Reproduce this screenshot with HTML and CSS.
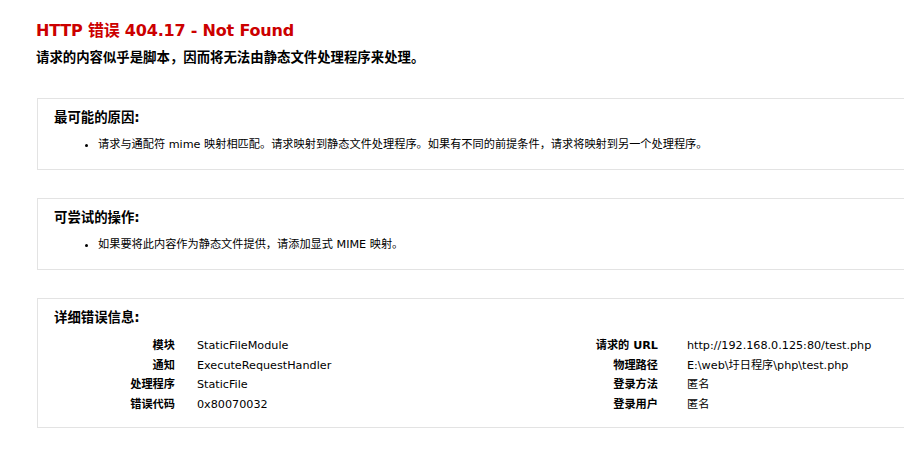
FILE: index.html
```html
<!DOCTYPE html>
<html>
<head>
<meta charset="utf-8">
<title>IIS 10.0 详细错误 - 404.17 - Not Found</title>
<link rel="stylesheet" href="styles.css">
</head>
<body>
<div id="content">

<div class="header">
<h1>HTTP 错误 404.17 - Not Found</h1>
<h2>请求的内容似乎是脚本，因而将无法由静态文件处理程序来处理。</h2>
</div>

<div class="content-container">
<h3>最可能的原因:</h3>
<ul>
<li>请求与通配符 mime 映射相匹配。请求映射到静态文件处理程序。如果有不同的前提条件，请求将映射到另一个处理程序。</li>
</ul>
</div>

<div class="content-container">
<h3>可尝试的操作:</h3>
<ul>
<li>如果要将此内容作为静态文件提供，请添加显式 MIME 映射。</li>
</ul>
</div>

<div class="content-container">
<h3>详细错误信息:</h3>
<div class="details">
<div class="details-left">
<div class="label">模块</div><div class="value">StaticFileModule</div>
<div class="label">通知</div><div class="value">ExecuteRequestHandler</div>
<div class="label">处理程序</div><div class="value">StaticFile</div>
<div class="label">错误代码</div><div class="value">0x80070032</div>
</div>
<div class="details-right">
<div class="label">请求的 URL</div><div class="value">http://192.168.0.125:80/test.php</div>
<div class="label">物理路径</div><div class="value">E:\web\圩日程序\php\test.php</div>
<div class="label">登录方法</div><div class="value">匿名</div>
<div class="label">登录用户</div><div class="value">匿名</div>
</div>
</div>
</div>

</div>
</body>
</html>
```

FILE: styles.css
```css
body {
    margin: 0;
    font-family: "DejaVu Sans", "Noto Sans CJK SC", sans-serif;
    font-size: 11.2px;
    color: #000;
    background: #fff;
    overflow-x: hidden;
}

#content {
    padding: 20px 0 0 36px;
}

h1 {
    margin: 0;
    font-size: 16px;
    line-height: 22px;
    letter-spacing: -0.2px;
    color: #cc0000;
}

h2 {
    margin: 7px 0 0;
    font-size: 13.4px;
    line-height: 18px;
}

h3 {
    margin: 0;
    font-size: 13.4px;
    line-height: 18px;
}

.content-container {
    margin: 28px -10px 0 1px;
    padding: 10px 16px;
    border: 1px solid #e3e3e3;
}

.header + .content-container {
    margin-top: 31px;
}

ul {
    margin: 10px 0 6px;
    padding-left: 44px;
}

li {
    line-height: 16px;
}

.details {
    display: flex;
    margin: 9px 0 3px;
    line-height: 19.5px;
}

.details-left {
    width: 475px;
    display: grid;
    grid-template-columns: 121px 1fr;
    column-gap: 22px;
}

.details-right {
    display: grid;
    grid-template-columns: 129px 1fr;
    column-gap: 29px;
}

.label {
    font-weight: bold;
    text-align: right;
}
```
